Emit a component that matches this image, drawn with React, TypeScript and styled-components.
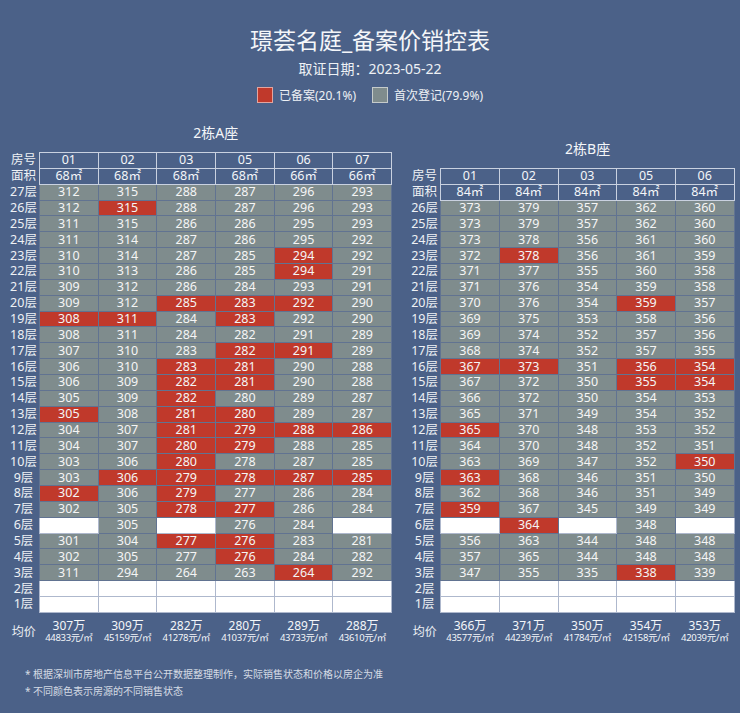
import React from "react";
import styled, { createGlobalStyle } from "styled-components";

const GlobalStyle = createGlobalStyle`
  body {
    margin: 0;
    background: #4b6188;
    font-family: "Noto Sans", "Noto Sans CJK SC", sans-serif;
    color: #f4f6f9;
  }
`;

const Page = styled.div`
  width: 740px;
  height: 713px;
  box-sizing: border-box;
  padding: 24px 0 0 8px;
  background: #4b6188;
  overflow: hidden;
`;

const Header = styled.div`
  display: flex;
  flex-direction: column;
  align-items: center;
  padding-right: 8px;
`;

const Title = styled.div`
  font-size: 23px;
  line-height: 32px;
  color: #f4f6f9;
`;

const SubTitle = styled.div`
  margin-top: 3px;
  font-size: 14px;
  line-height: 20px;
  color: #eef1f5;
`;

const Legend = styled.div`
  display: flex;
  align-items: center;
  gap: 16px;
  margin-top: 8px;
  height: 16px;
`;

const LegendItem = styled.div`
  display: flex;
  align-items: center;
  gap: 6px;
  font-size: 12px;
  color: #eef1f5;
`;

const Swatch = styled.span<{ $color: string }>`
  width: 16px;
  height: 16px;
  box-sizing: border-box;
  background: ${(p) => p.$color};
  border: 1px solid rgba(255, 255, 255, 0.55);
`;

const Panels = styled.div`
  display: flex;
  align-items: flex-end;
  gap: 17px;
  margin-top: 20px;
`;

const Panel = styled.div`
  display: flex;
  flex-direction: column;
`;

const PanelTitle = styled.div`
  margin-left: 31.5px;
  margin-bottom: 9px;
  text-align: center;
  font-size: 14px;
  line-height: 20px;
  color: #f4f6f9;
`;

const Table = styled.table<{ $cols: number }>`
  border-collapse: collapse;
  table-layout: fixed;
  width: ${(p) => 31.5 + p.$cols * 58.7}px;
`;

const Row = styled.tr`
  height: 15.87px;
`;

const LabelCol = styled.col`
  width: 31.5px;
`;

const DataCol = styled.col`
  width: 58.7px;
`;

const Label = styled.th`
  padding: 0;
  font-weight: 400;
  font-size: 12.5px;
  line-height: 14px;
  text-align: center;
  color: #eef1f5;
  border: none;
`;

const HeadCell = styled.td`
  padding: 0;
  text-align: center;
  font-size: 12.5px;
  line-height: 14px;
  color: #f4f6f9;
  border: 1px solid #c9d1e0;
`;

const Cell = styled.td<{ $state: "sold" | "open" | "none" }>`
  padding: 0;
  text-align: center;
  font-size: 12.5px;
  line-height: 14px;
  color: #f5f5f5;
  border: 1px solid ${(p) => (p.$state === "none" ? "#aeb8cd" : "#617391")};
  background: ${(p) =>
    p.$state === "sold" ? "#c0392b" : p.$state === "open" ? "#7f8c8d" : "#ffffff"};
`;

const AvgLabel = styled.th`
  padding: 6px 0 0;
  font-weight: 400;
  font-size: 12px;
  color: #eef1f5;
`;

const AvgCell = styled.td`
  padding: 6px 0 0;
  text-align: center;
  color: #f4f6f9;
  white-space: nowrap;
`;

const AvgTotal = styled.div`
  font-size: 12px;
  line-height: 13px;
`;

const AvgUnit = styled.div`
  font-size: 9.5px;
  line-height: 11px;
  letter-spacing: -0.3px;
`;

const Notes = styled.div`
  margin-top: 23px;
  padding-left: 17px;
  font-size: 10px;
  line-height: 17px;
  color: rgba(240, 243, 248, 0.85);
`;

type Building = {
  name: string;
  cols: string[];
  areas: string[];
  rows: string[];
  avg: [string, string][];
};

const buildingA: Building = {
  name: "2栋A座",
  cols: ["01", "02", "03", "05", "06", "07"],
  areas: ["68", "68", "68", "68", "66", "66"],
  rows: [
    "27|312 315 288 287 296 293",
    "26|312 315* 288 287 296 293",
    "25|311 315 286 286 295 293",
    "24|311 314 287 286 295 292",
    "23|310 314 287 285 294* 292",
    "22|310 313 286 285 294* 291",
    "21|309 312 286 284 293 291",
    "20|309 312 285* 283* 292* 290",
    "19|308* 311* 284 283* 292 290",
    "18|308 311 284 282 291 289",
    "17|307 310 283 282* 291* 289",
    "16|306 310 283* 281* 290 288",
    "15|306 309 282* 281* 290 288",
    "14|305 309 282* 280 289 287",
    "13|305* 308 281* 280* 289 287",
    "12|304 307 281* 279* 288* 286*",
    "11|304 307 280* 279* 288 285",
    "10|303 306 280* 278 287 285",
    "9|303 306* 279* 278* 287* 285*",
    "8|302* 306 279* 277 286 284",
    "7|302 305 278* 277* 286 284",
    "6|- 305 - 276 284 -",
    "5|301 304 277* 276* 283 281",
    "4|302 305 277 276* 284 282",
    "3|311 294 264 263 264* 292",
    "2|- - - - - -",
    "1|- - - - - -",
  ],
  avg: [
    ["307", "44833"],
    ["309", "45159"],
    ["282", "41278"],
    ["280", "41037"],
    ["289", "43733"],
    ["288", "43610"],
  ],
};

const buildingB: Building = {
  name: "2栋B座",
  cols: ["01", "02", "03", "05", "06"],
  areas: ["84", "84", "84", "84", "84"],
  rows: [
    "26|373 379 357 362 360",
    "25|373 379 357 362 360",
    "24|373 378 356 361 360",
    "23|372 378* 356 361 359",
    "22|371 377 355 360 358",
    "21|371 376 354 359 358",
    "20|370 376 354 359* 357",
    "19|369 375 353 358 356",
    "18|369 374 352 357 356",
    "17|368 374 352 357 355",
    "16|367* 373* 351 356* 354*",
    "15|367 372 350 355* 354*",
    "14|366 372 350 354 353",
    "13|365 371 349 354 352",
    "12|365* 370 348 353 352",
    "11|364 370 348 352 351",
    "10|363 369 347 352 350*",
    "9|363* 368 346 351 350",
    "8|362 368 346 351 349",
    "7|359* 367 345 349 349",
    "6|- 364* - 348 -",
    "5|356 363 344 348 348",
    "4|357 365 344 348 348",
    "3|347 355 335 338* 339",
    "2|- - - - -",
    "1|- - - - -",
  ],
  avg: [
    ["366", "43577"],
    ["371", "44239"],
    ["350", "41784"],
    ["354", "42158"],
    ["353", "42039"],
  ],
};

const parseCell = (raw: string) => {
  if (raw === "-") return { value: "", state: "none" as const };
  if (raw.endsWith("*")) return { value: raw.slice(0, -1), state: "sold" as const };
  return { value: raw, state: "open" as const };
};

const BuildingTable = ({ data }: { data: Building }) => (
  <Panel>
    <PanelTitle>{data.name}</PanelTitle>
    <Table $cols={data.cols.length}>
      <colgroup>
        <LabelCol />
        {data.cols.map((c) => (
          <DataCol key={c} />
        ))}
      </colgroup>
      <tbody>
        <Row>
          <Label>房号</Label>
          {data.cols.map((c) => (
            <HeadCell key={c}>{c}</HeadCell>
          ))}
        </Row>
        <Row>
          <Label>面积</Label>
          {data.areas.map((a, i) => (
            <HeadCell key={i}>{a}㎡</HeadCell>
          ))}
        </Row>
        {data.rows.map((line) => {
          const [floor, cells] = line.split("|");
          return (
            <Row key={floor}>
              <Label>{floor}层</Label>
              {cells.split(" ").map((raw, i) => {
                const cell = parseCell(raw);
                return (
                  <Cell key={i} $state={cell.state}>
                    {cell.value}
                  </Cell>
                );
              })}
            </Row>
          );
        })}
      </tbody>
      <tfoot>
        <tr>
          <AvgLabel>均价</AvgLabel>
          {data.avg.map(([total, unit], i) => (
            <AvgCell key={i}>
              <AvgTotal>{total}万</AvgTotal>
              <AvgUnit>{unit}元/㎡</AvgUnit>
            </AvgCell>
          ))}
        </tr>
      </tfoot>
    </Table>
  </Panel>
);

const App = () => (
  <Page>
    <GlobalStyle />
    <Header>
      <Title>璟荟名庭_备案价销控表</Title>
      <SubTitle>取证日期：2023-05-22</SubTitle>
      <Legend>
        <LegendItem>
          <Swatch $color="#c0392b" />
          已备案(20.1%)
        </LegendItem>
        <LegendItem>
          <Swatch $color="#7f8c8d" />
          首次登记(79.9%)
        </LegendItem>
      </Legend>
    </Header>
    <Panels>
      <BuildingTable data={buildingA} />
      <BuildingTable data={buildingB} />
    </Panels>
    <Notes>
      <div>* 根据深圳市房地产信息平台公开数据整理制作，实际销售状态和价格以房企为准</div>
      <div>* 不同颜色表示房源的不同销售状态</div>
    </Notes>
  </Page>
);

export default App;
